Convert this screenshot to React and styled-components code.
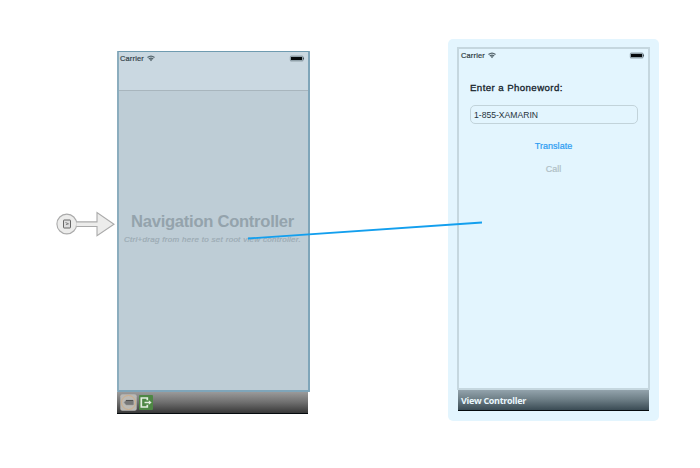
import React from "react";
import styled, { createGlobalStyle } from "styled-components";

const GlobalStyle = createGlobalStyle`
  * { box-sizing: border-box; }
  body {
    margin: 0;
    background: #fff;
    font-family: "Liberation Sans", Arial, sans-serif;
  }
  svg { display: block; flex: none; }
`;

const Canvas = styled.main`
  position: relative;
  display: flex;
  align-items: flex-start;
  width: 700px;
  height: 468px;
  padding: 39px 0 0 56px;
  overflow: hidden;
`;

const EntryPoint = styled.div`
  width: 61px;
  padding-top: 171px;
`;

const NavigationScene = styled.section`
  width: 193px;
  margin-top: 12px;
`;

const ViewScene = styled.section`
  width: 211px;
  height: 382px;
  margin-left: 138px;
  padding: 8px 9px 0;
  border-radius: 5px;
  background: #e3f5fe;
`;

const NavigationScreen = styled.div`
  display: flex;
  flex-direction: column;
  height: 341px;
  border: 2px solid #7fa5b9;
  border-top: 1px solid #6f9bb0;
  border-left-color: #8badbe;
  border-radius: 1px;
  background: #becdd6;
`;

const ViewScreen = styled.div`
  height: 343px;
  border: 2px solid #c5d7df;
`;

const NavigationBar = styled.header`
  height: 39px;
  border-bottom: 1px solid #a8b5bd;
  background: #cad8e1;
`;

const StatusBar = styled.div`
  display: flex;
  align-items: center;
  height: 12px;
  padding: 0 3px 0 ${(p) => (p.$dim ? "1px" : "2px")};
`;

const Carrier = styled.span`
  width: 27px;
  margin-top: 1px;
  font-size: 7.4px;
  line-height: 9px;
  letter-spacing: 0.2px;
  white-space: nowrap;
  color: ${(p) => (p.$dim ? "#34424a" : "#2e3b42")};
  -webkit-text-stroke: 0.2px currentColor;
`;

const Spacer = styled.span`
  flex: 1;
`;

const Placeholder = styled.div`
  display: flex;
  flex-direction: column;
  align-items: center;
  padding: 121px 2px 0 0;
  white-space: nowrap;
`;

const PlaceholderTitle = styled.h1`
  margin: 0;
  font-size: 16.6px;
  font-weight: 700;
  line-height: 20px;
  letter-spacing: -0.28px;
  color: #94a3ac;
`;

const PlaceholderHint = styled.p`
  margin: 3px 0 0 0;
  font-size: 8px;
  font-style: italic;
  line-height: 10px;
  letter-spacing: 0.3px;
  color: #9cabb4;
  -webkit-text-stroke: 0.2px currentColor;
`;

const Dock = styled.footer`
  display: flex;
  align-items: center;
  width: 191px;
  height: ${(p) => p.$height};
  margin-left: ${(p) => p.$offset};
  padding: 0 3px;
  gap: 2px;
  border-bottom: 1px solid #050b0e;
  background: ${(p) =>
    p.$selected
      ? "linear-gradient(#93a3ac, #6d7e86 48%, #3a4b54)"
      : "linear-gradient(#9a9a9a, #707070 48%, #383838)"};
`;

const DockTitle = styled.span`
  margin-top: 1px;
  font-family: "Open Sans", sans-serif;
  font-size: 9px;
  font-weight: 700;
  line-height: 12px;
  letter-spacing: -0.31px;
  white-space: nowrap;
  color: #eaf7fc;
`;

const Form = styled.div`
  display: flex;
  flex-direction: column;
  padding: 20px 11px 0 11px;
`;

const FieldLabel = styled.label`
  font-size: 9.7px;
  line-height: 14px;
  letter-spacing: 0.4px;
  color: #14222a;
  -webkit-text-stroke: 0.3px currentColor;
`;

const PhoneInput = styled.div`
  width: 168px;
  height: 19px;
  margin-top: 10px;
  padding-left: 3px;
  border: 1px solid #c2d3da;
  border-radius: 5px;
  font-size: 8.6px;
  line-height: 18px;
  color: #26343b;
`;

const Action = styled.button`
  align-self: center;
  height: 12px;
  margin: ${(p) => p.$gap} 0 0 0;
  padding: 0;
  border: 0;
  background: none;
  font: 9px/12px "Liberation Sans", Arial, sans-serif;
  letter-spacing: 0.05px;
  color: ${(p) => (p.$muted ? "#b0bfc6" : "#2c9cf2")};
  -webkit-text-stroke: 0.2px currentColor;
`;

const SegueLine = styled.svg`
  position: absolute;
  left: 0;
  top: 0;
  pointer-events: none;
`;

const Wifi = () => (
  <svg width="8" height="7" viewBox="0 0 8 6" fill="none" stroke="#53636b">
    <path d="M.5 2Q4-.8 7.5 2M1.8 3.5Q4 1.8 6.2 3.5" strokeWidth="1.3" />
    <path d="M2.7 4.1Q4 3.3 5.3 4.1L4 5.8Z" fill="#42525a" stroke="none" />
  </svg>
);

const Battery = () => (
  <svg width="16" height="7" viewBox="0 0 16 7">
    <rect x=".8" y=".6" width="13.7" height="5.8" rx="1.5" fill="#91a1aa" />
    <rect x="2" y="2" width="11" height="3" fill="#05090b" />
    <path d="M14 2Q16.2 3.5 14 5Z" fill="#45535a" />
  </svg>
);

const EntryArrow = () => (
  <svg width="60" height="28" viewBox="0 0 60 28">
    <g fill="#ececeb" stroke="#aaa" strokeWidth="1.1">
      <circle cx="10.8" cy="14" r="9.9" />
      <path d="M20.3 11.9H41V2.5L58 14.2 41 25.8V16.5H20.3" />
    </g>
    <rect x="7.5" y="10" width="7" height="8" rx=".5" fill="#ddd" stroke="#666" />
    <path d="M9.5 12.5l3 1.3-2.6.9" fill="none" stroke="#777" strokeWidth=".9" />
  </svg>
);

const ControllerIcon = () => (
  <svg width="17" height="17" viewBox="0 0 17 17">
    <rect x=".3" y=".3" width="16.4" height="16.4" rx="2" fill="#b9b8b5" />
    <circle cx="8.5" cy="8.5" r="7" fill="#bcbab5" stroke="#cfae88" />
    <path d="M4 8.5L6.2 6H13q.7 0 .7.7v3.6q0 .7-.7.7H6.2Z" fill="#777" stroke="#999" strokeWidth=".5" />
    <path d="M6 6.5h7" stroke="#505050" />
  </svg>
);

const ExitIcon = () => (
  <svg width="14" height="15" viewBox="0 0 14 15">
    <rect width="14" height="15" rx="1" fill="#4e8744" />
    <path d="M8.3 5.2V3H2.3v9h6V9.8" fill="none" stroke="#e3eddf" strokeWidth="1.7" />
    <path d="M5.5 7.5H11" stroke="#e3eddf" strokeWidth="1.5" />
    <path d="M9.8 5.3L12.6 7.5 9.8 9.7Z" fill="#e3eddf" />
  </svg>
);

const Status = ({ dim }) => (
  <StatusBar $dim={dim}>
    <Carrier $dim={dim}>Carrier</Carrier>
    <Wifi />
    <Spacer />
    <Battery />
  </StatusBar>
);

export default function App() {
  return (
    <>
      <GlobalStyle />
      <Canvas>
        <EntryPoint>
          <EntryArrow />
        </EntryPoint>
        <NavigationScene>
          <NavigationScreen>
            <NavigationBar>
              <Status dim />
            </NavigationBar>
            <Placeholder>
              <PlaceholderTitle>Navigation Controller</PlaceholderTitle>
              <PlaceholderHint>Ctrl+drag from here to set root view controller.</PlaceholderHint>
            </Placeholder>
          </NavigationScreen>
          <Dock $height="22px" $offset="0">
            <ControllerIcon />
            <ExitIcon />
          </Dock>
        </NavigationScene>
        <ViewScene>
          <ViewScreen>
            <Status />
            <Form>
              <FieldLabel>Enter a Phoneword:</FieldLabel>
              <PhoneInput>1-855-XAMARIN</PhoneInput>
              <Action $gap="16px">Translate</Action>
              <Action $gap="11px" $muted>Call</Action>
            </Form>
          </ViewScreen>
          <Dock $height="21px" $offset="1px" $selected>
            <DockTitle>View Controller</DockTitle>
          </Dock>
        </ViewScene>
        <SegueLine width="700" height="468" viewBox="0 0 700 468">
          <path d="M248 238.5L482 222.5" stroke="#139fee" strokeWidth="1.8" />
        </SegueLine>
      </Canvas>
    </>
  );
}
